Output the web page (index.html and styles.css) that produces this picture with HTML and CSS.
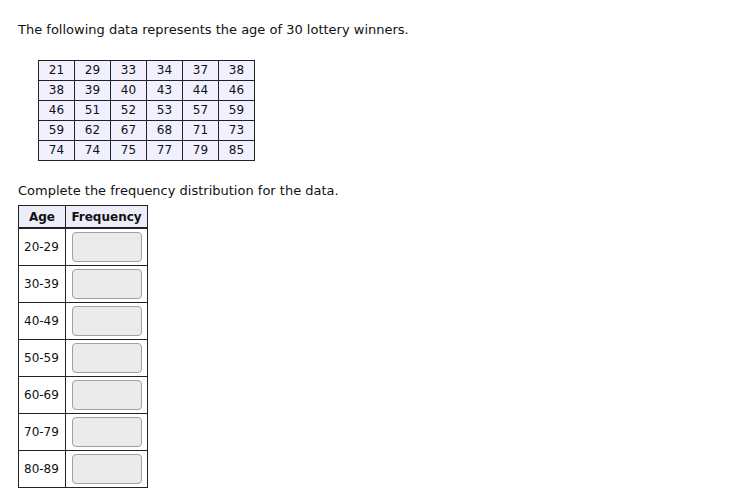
FILE: index.html
```html
<!DOCTYPE html>
<html>
<head>
<meta charset="utf-8">
<link rel="stylesheet" href="styles.css">
</head>
<body>
<div class="page">
  <p class="intro">The following data represents the age of 30 lottery winners.</p>
  <table class="data">
    <tr><td>21</td><td>29</td><td>33</td><td>34</td><td>37</td><td>38</td></tr>
    <tr><td>38</td><td>39</td><td>40</td><td>43</td><td>44</td><td>46</td></tr>
    <tr><td>46</td><td>51</td><td>52</td><td>53</td><td>57</td><td>59</td></tr>
    <tr><td>59</td><td>62</td><td>67</td><td>68</td><td>71</td><td>73</td></tr>
    <tr><td>74</td><td>74</td><td>75</td><td>77</td><td>79</td><td>85</td></tr>
  </table>
  <p class="prompt">Complete the frequency distribution for the data.</p>
  <table class="freq">
    <thead>
      <tr><th class="age">Age</th><th class="fr">Frequency</th></tr>
    </thead>
    <tbody>
      <tr><td class="age">20-29</td><td class="fr"><span class="box"></span></td></tr>
      <tr><td class="age">30-39</td><td class="fr"><span class="box"></span></td></tr>
      <tr><td class="age">40-49</td><td class="fr"><span class="box"></span></td></tr>
      <tr><td class="age">50-59</td><td class="fr"><span class="box"></span></td></tr>
      <tr><td class="age">60-69</td><td class="fr"><span class="box"></span></td></tr>
      <tr><td class="age">70-79</td><td class="fr"><span class="box"></span></td></tr>
      <tr><td class="age">80-89</td><td class="fr"><span class="box"></span></td></tr>
    </tbody>
  </table>
</div>
</body>
</html>
```
FILE: styles.css
```css
html, body { margin: 0; padding: 0; background: #fff; }
body {
  font-family: "DejaVu Sans", Verdana, sans-serif;
  font-size: 12px;
  color: #111;
}
.page { padding: 21px 18px 0; }
.intro { margin: 0; font-size: 13px; line-height: 18px; }
.data {
  margin: 21px 0 0 20px;
  border-collapse: collapse;
  background: #f0f0ff;
}
.data td {
  border: 1px solid #222;
  width: 35px;
  height: 19px;
  padding: 0;
  text-align: center;
  line-height: 19px;
}
.prompt { margin: 21px 0 0; font-size: 13px; line-height: 18px; }
.freq {
  margin-top: 5px;
  border-collapse: collapse;
}
.freq th {
  background: #ededfa;
  border: 1px solid #222;
  border-bottom: 2px solid #222;
  height: 21px;
  padding: 0;
  font-weight: bold;
}
.freq th.age { width: 46px; }
.freq th.fr { width: 81px; }
.freq td {
  border: 1px solid #222;
  height: 36px;
  padding: 0;
}
.freq td.age { padding-left: 5px; text-align: left; }
.freq td.fr { text-align: center; }
.box {
  display: block;
  margin: 0 auto;
  width: 68px;
  height: 28px;
  background: #ebebeb;
  border: 1px solid #a0a0a0;
  border-radius: 4px;
}
```
